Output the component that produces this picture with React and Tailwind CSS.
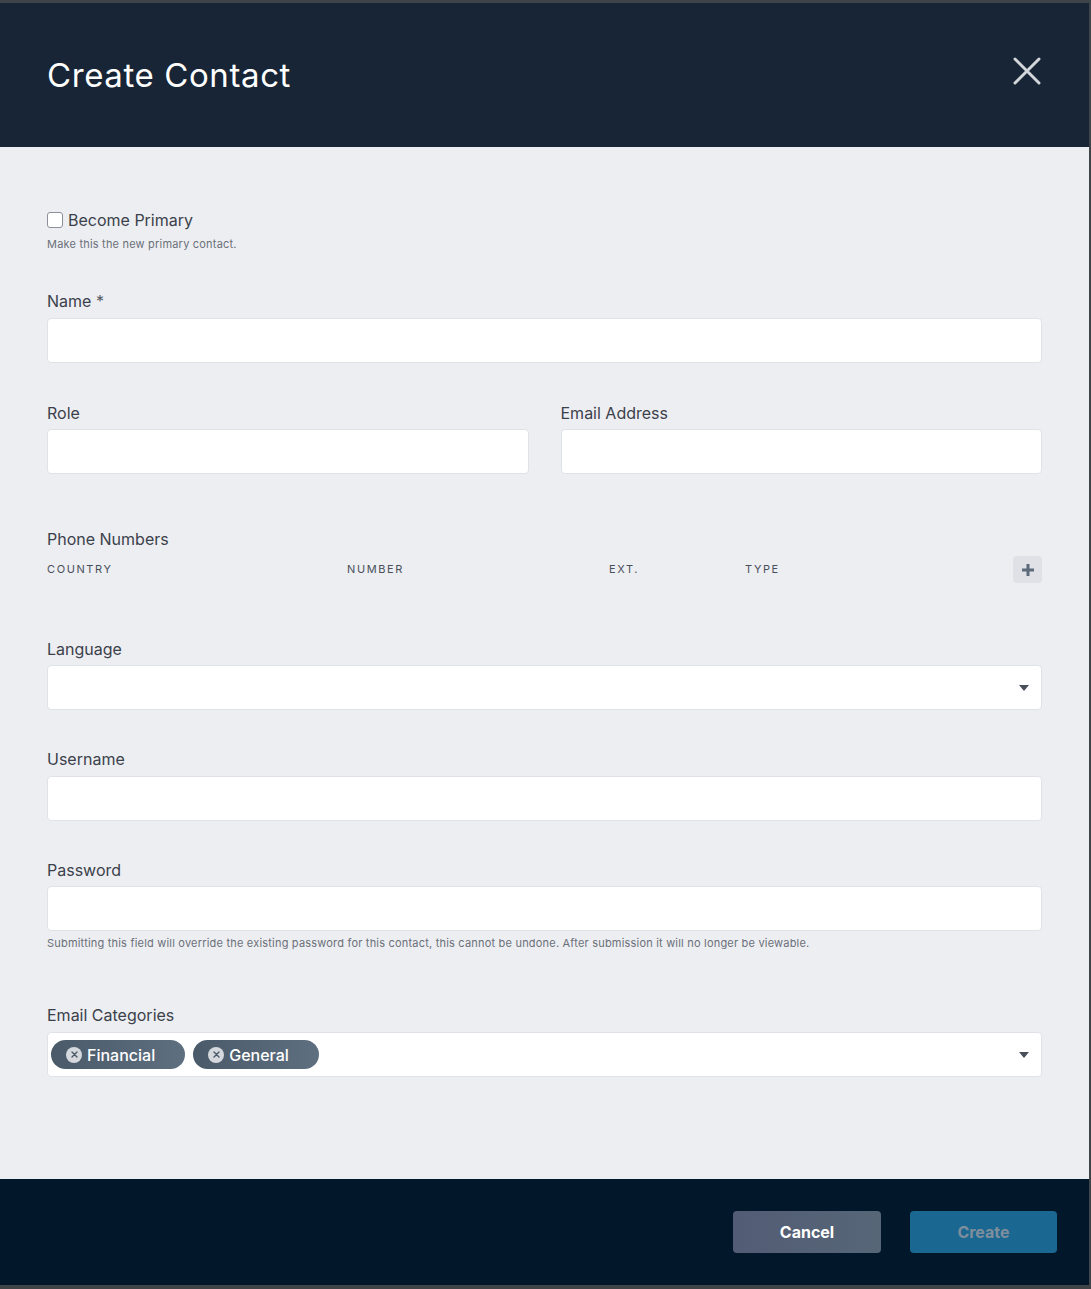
import { useState } from "react";

const font = { fontFamily: "Inter, 'Noto Sans', sans-serif" };

const Label = ({ children, className = "" }) => (
  <div className={`text-base leading-6 text-[#3b414b] ${className}`}>{children}</div>
);

const Input = ({ className = "", children }) => (
  <div
    className={`h-[45px] w-full rounded-[4px] border border-[#dfe2e7] bg-white flex items-center ${className}`}
  >
    {children}
  </div>
);

const Caret = () => (
  <svg width="10" height="6" viewBox="0 0 10 6" className="ml-auto mr-[12px]">
    <path d="M0 0h10L5 6z" fill="#4a505b" />
  </svg>
);

const Chip = ({ label }) => (
  <div className="h-[29px] rounded-full bg-gradient-to-r from-[#4a5a69] to-[#5e6f80] flex items-center pl-[15px] pr-[30px] gap-[5px]">
    <span className="w-[16px] h-[16px] rounded-full bg-[#d5d9de] flex items-center justify-center">
      <svg width="7" height="7" viewBox="0 0 7 7">
        <path d="M1 1l5 5M6 1L1 6" stroke="#4a5767" strokeWidth="1.4" strokeLinecap="round" />
      </svg>
    </span>
    <span className="text-white text-base font-medium leading-none">{label}</span>
  </div>
);

const App = () => {
  const [primary, setPrimary] = useState(false);

  return (
    <div className="w-[1091px] h-[1289px] bg-[#3f4448] pt-[3px]" style={font}>
      <div className="w-[1089px] h-[1282px] flex flex-col">
        {/* header */}
        <div className="h-[144px] bg-[#172536] flex items-center justify-between pl-[47px] pr-[48px] shrink-0">
          <h1 className="text-[33px] text-white font-normal leading-none tracking-[0.6px]">Create Contact</h1>
          <button className="mb-[8px]">
            <svg width="28" height="28" viewBox="0 0 28 28">
              <path d="M2 2l24 24M26 2L2 26" stroke="#d3d6da" strokeWidth="3" strokeLinecap="round" />
            </svg>
          </button>
        </div>

        {/* body */}
        <div className="flex-1 bg-[#edeef2] pl-[47px] pr-[47px] pt-[61px]">
          <label className="flex items-center gap-[5px] cursor-pointer">
            <input
              type="checkbox"
              checked={primary}
              onChange={(e) => setPrimary(e.target.checked)}
              className="appearance-none w-[16px] h-[16px] rounded-[3px] border border-[#8a8f98] bg-white"
            />
            <span className="text-base leading-6 text-[#3b414b]">Become Primary</span>
          </label>
          <div className="mt-[4px] text-[11px] leading-4 tracking-[0.2px] text-[#6b7079]">
            Make this the new primary contact.
          </div>

          <Label className="mt-[37px]">
            Name <span className="text-[#555b66]">*</span>
          </Label>
          <Input className="mt-[5px]" />

          <div className="mt-[38px] grid grid-cols-2 gap-[32px]">
            <div>
              <Label>Role</Label>
              <Input className="mt-[4px]" />
            </div>
            <div>
              <Label>Email Address</Label>
              <Input className="mt-[4px]" />
            </div>
          </div>

          <Label className="mt-[53px]">Phone Numbers</Label>
          <div className="mt-[5px] h-[27px] flex items-center text-[11px] tracking-[1.6px] text-[#4a505b]">
            <span className="w-[300px]">COUNTRY</span>
            <span className="w-[262px]">NUMBER</span>
            <span className="w-[136px]">EXT.</span>
            <span>TYPE</span>
            <button className="ml-auto w-[29px] h-[27px] rounded-[4px] bg-[#dfe1e6] flex items-center justify-center">
              <svg width="14" height="14" viewBox="0 0 14 14">
                <path d="M7 1v12M1 7h12" stroke="#5c6a7a" strokeWidth="3" />
              </svg>
            </button>
          </div>

          <Label className="mt-[54px]">Language</Label>
          <Input className="mt-[4px]">
            <Caret />
          </Input>

          <Label className="mt-[37px]">Username</Label>
          <Input className="mt-[5px]" />

          <Label className="mt-[37px]">Password</Label>
          <Input className="mt-[4px]" />
          <div className="mt-[4px] text-[11px] leading-4 tracking-[0.2px] text-[#6b7079]">
            Submitting this field will override the existing password for this contact, this cannot be undone. After
            submission it will no longer be viewable.
          </div>

          <Label className="mt-[52px]">Email Categories</Label>
          <Input className="mt-[5px] pl-[3px] gap-[8px]">
            <Chip label="Financial" />
            <Chip label="General" />
            <Caret />
          </Input>
        </div>

        {/* footer */}
        <div className="h-[106px] bg-[#03172a] flex items-center justify-end gap-[29px] pr-[32px] shrink-0">
          <button className="w-[148px] h-[42px] rounded-[4px] bg-gradient-to-r from-[#535c75] to-[#566677] text-white font-bold text-base">
            Cancel
          </button>
          <button className="w-[147px] h-[42px] rounded-[4px] bg-[#1a6791] text-[#7f8e9c] font-bold text-base">
            Create
          </button>
        </div>
      </div>
    </div>
  );
};

export default App;
